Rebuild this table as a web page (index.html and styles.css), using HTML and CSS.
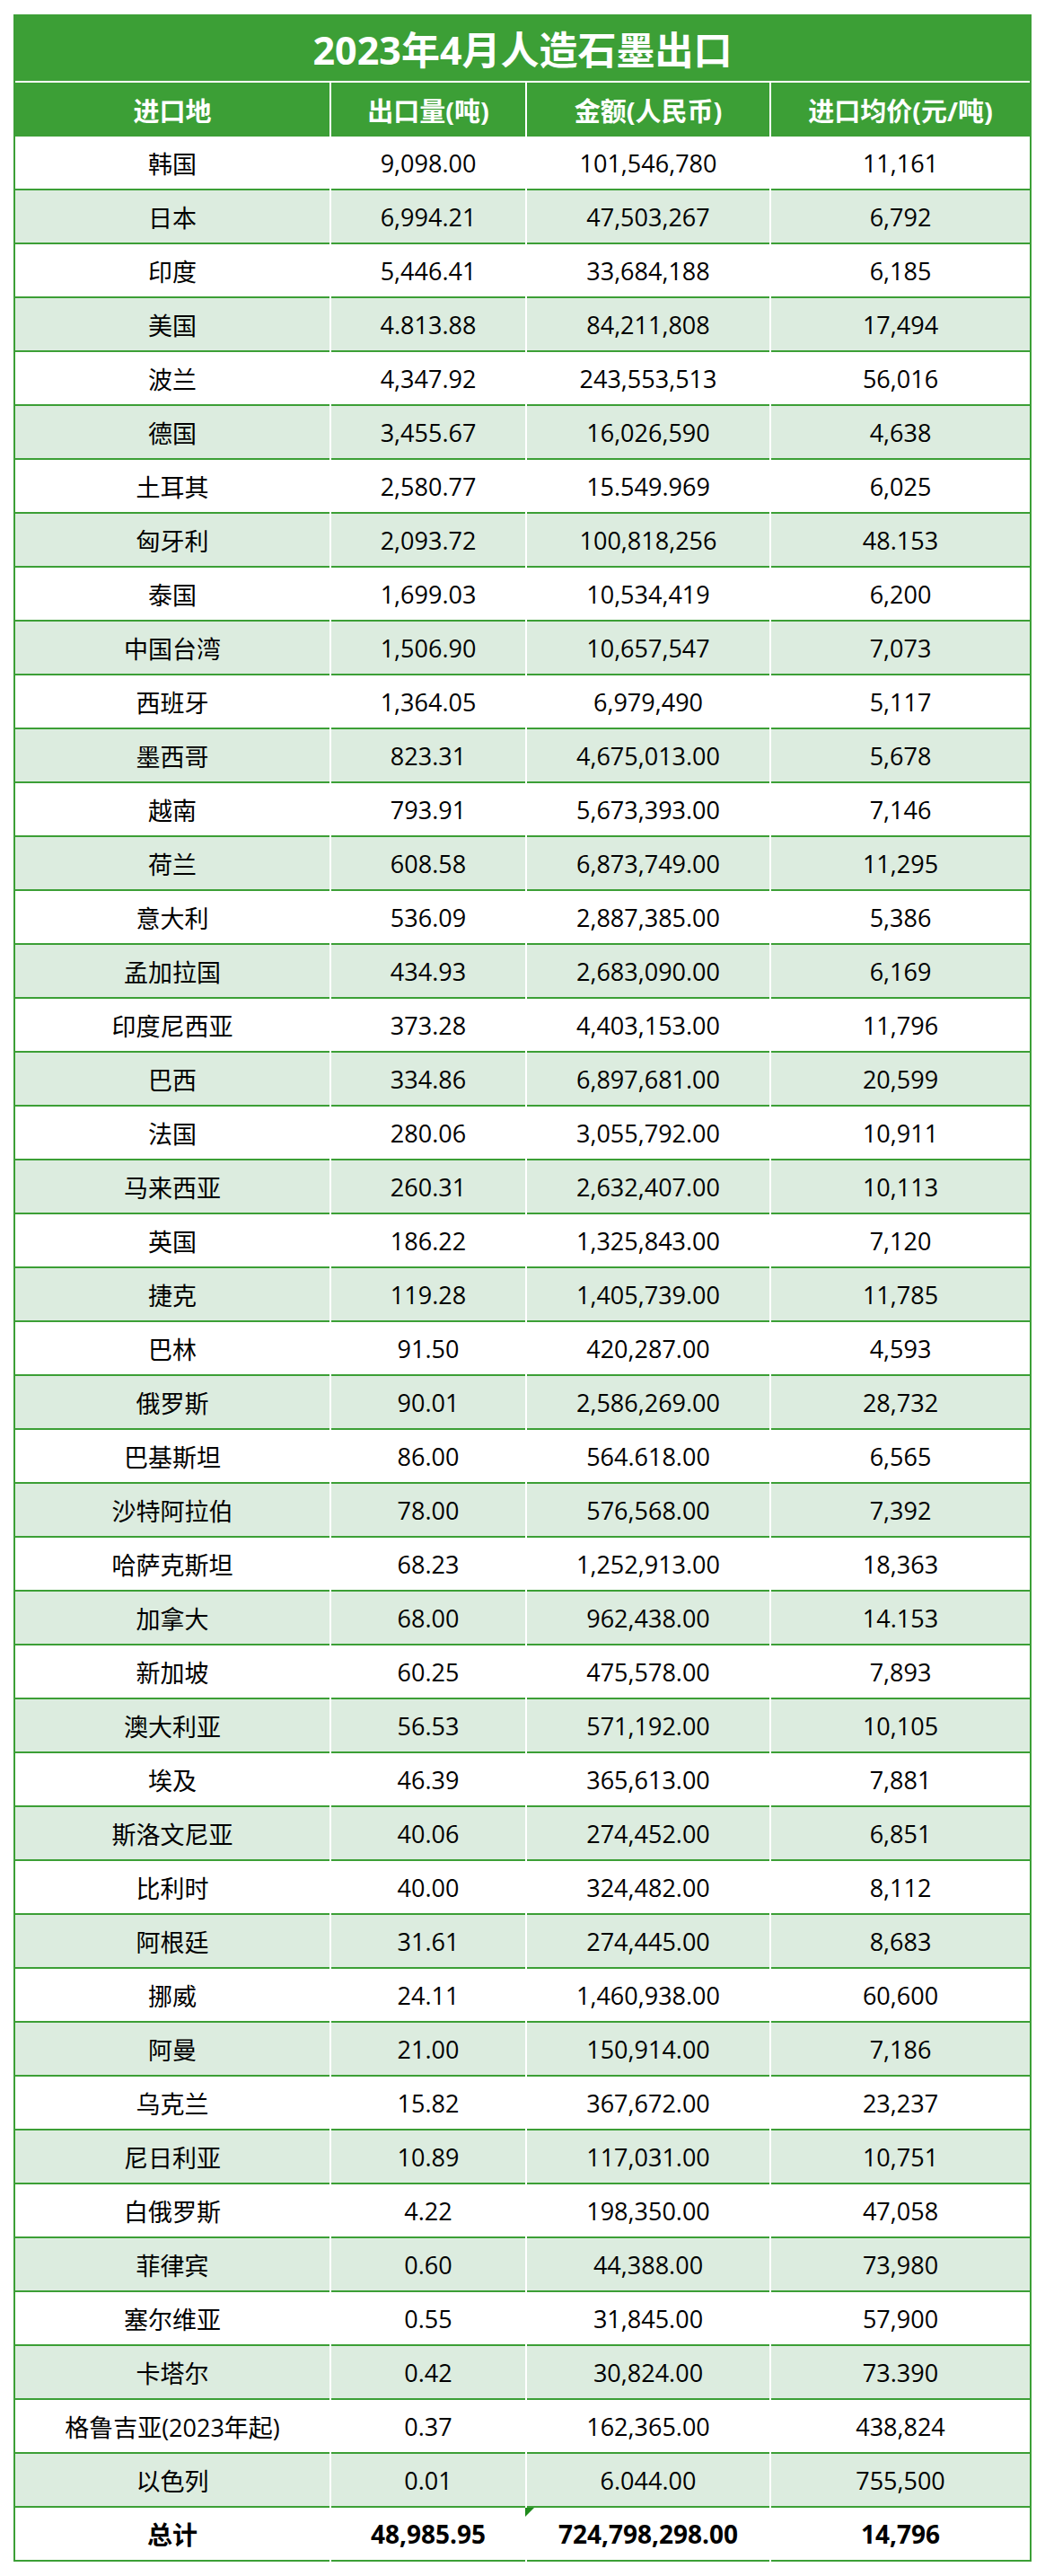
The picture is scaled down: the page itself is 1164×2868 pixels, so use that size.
FILE: index.html
```html
<!DOCTYPE html>
<html lang="zh-CN">
<head>
<meta charset="utf-8">
<title>2023年4月人造石墨出口</title>
<link rel="stylesheet" href="styles.css">
</head>
<body>
<div class="sheet">
  <div class="title">2023年4月人造石墨出口</div>
  <div class="row head"><div class="c">进口地</div><div class="c">出口量(吨)</div><div class="c">金额(人民币)</div><div class="c">进口均价(元/吨)</div></div>
  <div class="row"><div class="c">韩国</div><div class="c">9,098.00</div><div class="c">101,546,780</div><div class="c">11,161</div></div>
  <div class="row alt"><div class="c">日本</div><div class="c">6,994.21</div><div class="c">47,503,267</div><div class="c">6,792</div></div>
  <div class="row"><div class="c">印度</div><div class="c">5,446.41</div><div class="c">33,684,188</div><div class="c">6,185</div></div>
  <div class="row alt"><div class="c">美国</div><div class="c">4.813.88</div><div class="c">84,211,808</div><div class="c">17,494</div></div>
  <div class="row"><div class="c">波兰</div><div class="c">4,347.92</div><div class="c">243,553,513</div><div class="c">56,016</div></div>
  <div class="row alt"><div class="c">德国</div><div class="c">3,455.67</div><div class="c">16,026,590</div><div class="c">4,638</div></div>
  <div class="row"><div class="c">土耳其</div><div class="c">2,580.77</div><div class="c">15.549.969</div><div class="c">6,025</div></div>
  <div class="row alt"><div class="c">匈牙利</div><div class="c">2,093.72</div><div class="c">100,818,256</div><div class="c">48.153</div></div>
  <div class="row"><div class="c">泰国</div><div class="c">1,699.03</div><div class="c">10,534,419</div><div class="c">6,200</div></div>
  <div class="row alt"><div class="c">中国台湾</div><div class="c">1,506.90</div><div class="c">10,657,547</div><div class="c">7,073</div></div>
  <div class="row"><div class="c">西班牙</div><div class="c">1,364.05</div><div class="c">6,979,490</div><div class="c">5,117</div></div>
  <div class="row alt"><div class="c">墨西哥</div><div class="c">823.31</div><div class="c">4,675,013.00</div><div class="c">5,678</div></div>
  <div class="row"><div class="c">越南</div><div class="c">793.91</div><div class="c">5,673,393.00</div><div class="c">7,146</div></div>
  <div class="row alt"><div class="c">荷兰</div><div class="c">608.58</div><div class="c">6,873,749.00</div><div class="c">11,295</div></div>
  <div class="row"><div class="c">意大利</div><div class="c">536.09</div><div class="c">2,887,385.00</div><div class="c">5,386</div></div>
  <div class="row alt"><div class="c">孟加拉国</div><div class="c">434.93</div><div class="c">2,683,090.00</div><div class="c">6,169</div></div>
  <div class="row"><div class="c">印度尼西亚</div><div class="c">373.28</div><div class="c">4,403,153.00</div><div class="c">11,796</div></div>
  <div class="row alt"><div class="c">巴西</div><div class="c">334.86</div><div class="c">6,897,681.00</div><div class="c">20,599</div></div>
  <div class="row"><div class="c">法国</div><div class="c">280.06</div><div class="c">3,055,792.00</div><div class="c">10,911</div></div>
  <div class="row alt"><div class="c">马来西亚</div><div class="c">260.31</div><div class="c">2,632,407.00</div><div class="c">10,113</div></div>
  <div class="row"><div class="c">英国</div><div class="c">186.22</div><div class="c">1,325,843.00</div><div class="c">7,120</div></div>
  <div class="row alt"><div class="c">捷克</div><div class="c">119.28</div><div class="c">1,405,739.00</div><div class="c">11,785</div></div>
  <div class="row"><div class="c">巴林</div><div class="c">91.50</div><div class="c">420,287.00</div><div class="c">4,593</div></div>
  <div class="row alt"><div class="c">俄罗斯</div><div class="c">90.01</div><div class="c">2,586,269.00</div><div class="c">28,732</div></div>
  <div class="row"><div class="c">巴基斯坦</div><div class="c">86.00</div><div class="c">564.618.00</div><div class="c">6,565</div></div>
  <div class="row alt"><div class="c">沙特阿拉伯</div><div class="c">78.00</div><div class="c">576,568.00</div><div class="c">7,392</div></div>
  <div class="row"><div class="c">哈萨克斯坦</div><div class="c">68.23</div><div class="c">1,252,913.00</div><div class="c">18,363</div></div>
  <div class="row alt"><div class="c">加拿大</div><div class="c">68.00</div><div class="c">962,438.00</div><div class="c">14.153</div></div>
  <div class="row"><div class="c">新加坡</div><div class="c">60.25</div><div class="c">475,578.00</div><div class="c">7,893</div></div>
  <div class="row alt"><div class="c">澳大利亚</div><div class="c">56.53</div><div class="c">571,192.00</div><div class="c">10,105</div></div>
  <div class="row"><div class="c">埃及</div><div class="c">46.39</div><div class="c">365,613.00</div><div class="c">7,881</div></div>
  <div class="row alt"><div class="c">斯洛文尼亚</div><div class="c">40.06</div><div class="c">274,452.00</div><div class="c">6,851</div></div>
  <div class="row"><div class="c">比利时</div><div class="c">40.00</div><div class="c">324,482.00</div><div class="c">8,112</div></div>
  <div class="row alt"><div class="c">阿根廷</div><div class="c">31.61</div><div class="c">274,445.00</div><div class="c">8,683</div></div>
  <div class="row"><div class="c">挪威</div><div class="c">24.11</div><div class="c">1,460,938.00</div><div class="c">60,600</div></div>
  <div class="row alt"><div class="c">阿曼</div><div class="c">21.00</div><div class="c">150,914.00</div><div class="c">7,186</div></div>
  <div class="row"><div class="c">乌克兰</div><div class="c">15.82</div><div class="c">367,672.00</div><div class="c">23,237</div></div>
  <div class="row alt"><div class="c">尼日利亚</div><div class="c">10.89</div><div class="c">117,031.00</div><div class="c">10,751</div></div>
  <div class="row"><div class="c">白俄罗斯</div><div class="c">4.22</div><div class="c">198,350.00</div><div class="c">47,058</div></div>
  <div class="row alt"><div class="c">菲律宾</div><div class="c">0.60</div><div class="c">44,388.00</div><div class="c">73,980</div></div>
  <div class="row"><div class="c">塞尔维亚</div><div class="c">0.55</div><div class="c">31,845.00</div><div class="c">57,900</div></div>
  <div class="row alt"><div class="c">卡塔尔</div><div class="c">0.42</div><div class="c">30,824.00</div><div class="c">73.390</div></div>
  <div class="row"><div class="c">格鲁吉亚(2023年起)</div><div class="c">0.37</div><div class="c">162,365.00</div><div class="c">438,824</div></div>
  <div class="row alt"><div class="c">以色列</div><div class="c">0.01</div><div class="c">6.044.00</div><div class="c">755,500</div></div>
  <div class="row total"><div class="c">总计</div><div class="c">48,985.95</div><div class="c flagged">724,798,298.00<span class="err"></span></div><div class="c">14,796</div></div>
</div>
</body>
</html>
```
FILE: styles.css
```css
html, body {
  margin: 0;
  padding: 0;
  background: #ffffff;
}

body {
  padding: 16px 0 0 15px;
  font-family: "Open Sans", "Noto Sans CJK SC", sans-serif;
  color: #000000;
}

.sheet {
  width: 1130px;
  border-left: 2px solid #3c9f36;
  border-right: 2px solid #3c9f36;
  background: #ffffff;
}

.title {
  height: 74px;
  margin-bottom: 2px;
  background: #3c9f36;
  color: #ffffff;
  font-weight: 700;
  font-size: 43px;
  display: flex;
  align-items: center;
  justify-content: center;
  letter-spacing: 0;
}

.row {
  display: grid;
  grid-template-columns: 350px 216px 270px 288px;
  column-gap: 2px;
  background: #ffffff;
}

.c {
  height: 58px;
  border-bottom: 2px solid #3c9f36;
  display: flex;
  align-items: center;
  justify-content: center;
  font-size: 27px;
  background: #ffffff;
  white-space: nowrap;
}

.alt .c {
  background: #dcecdf;
}

.head .c {
  height: 60px;
  border-bottom: 0;
  background: #3c9f36;
  color: #ffffff;
  font-weight: 700;
  font-size: 29px;
}

.total .c {
  font-weight: 700;
  font-size: 28px;
}

.flagged {
  position: relative;
}

.err {
  position: absolute;
  left: -2px;
  top: 0;
  width: 0;
  height: 0;
  border-top: 10px solid #1f8a1c;
  border-right: 10px solid transparent;
}
```
